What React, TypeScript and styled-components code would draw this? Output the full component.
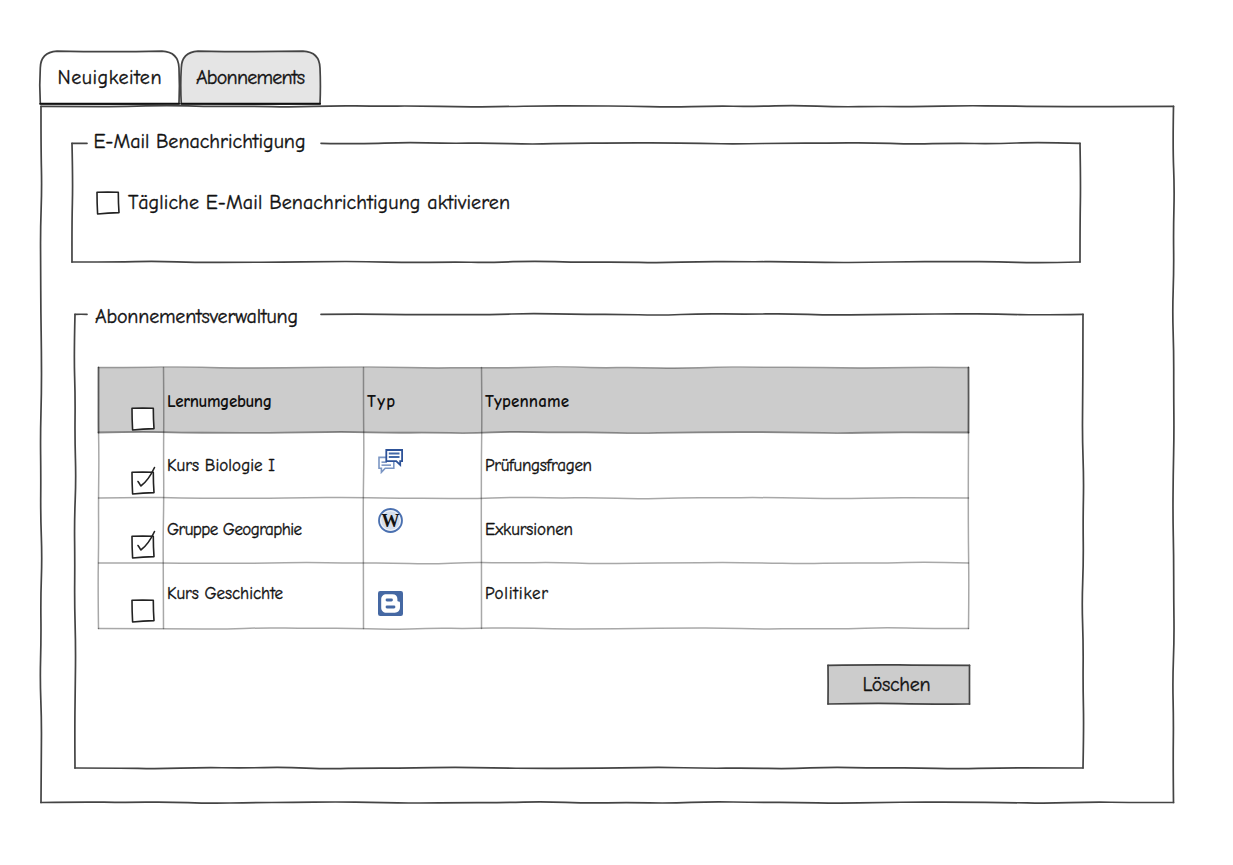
import React, { useLayoutEffect, useRef, useState } from 'react';
import styled, { createGlobalStyle } from 'styled-components';

const Global = createGlobalStyle`
  * { box-sizing: border-box; }
  body { margin: 0; background: #fff; }
`;

/* ---------- hand-drawn strokes ---------- */

type Point = [number, number];

// A slightly unsteady line between two points; the seed picks its waviness.
function wavy([x1, y1]: Point, [x2, y2]: Point, seed: number, amp = 1.1): string {
  const length = Math.hypot(x2 - x1, y2 - y1);
  const steps = Math.max(2, Math.round(length / 42));
  const nx = -(y2 - y1) / length;
  const ny = (x2 - x1) / length;
  const points: Point[] = [];
  for (let i = 0; i <= steps; i++) {
    const t = i / steps;
    const edge = i === 0 || i === steps;
    const d = edge ? 0 : Math.sin(i * 2.1 + seed * 1.7) * Math.cos(i * 0.8 + seed) * amp;
    points.push([x1 + (x2 - x1) * t + nx * d, y1 + (y2 - y1) * t + ny * d]);
  }
  let path = `M${x1} ${y1}`;
  for (let i = 1; i < points.length - 1; i++) {
    const [px, py] = points[i];
    const last = i === points.length - 2;
    const ex = last ? x2 : (px + points[i + 1][0]) / 2;
    const ey = last ? y2 : (py + points[i + 1][1]) / 2;
    path += ` Q${px.toFixed(2)} ${py.toFixed(2)} ${ex.toFixed(2)} ${ey.toFixed(2)}`;
  }
  return path;
}

const Strokes = styled.svg`
  position: absolute;
  inset: 0;
  width: 100%;
  height: 100%;
  overflow: visible;
  fill: none;
  stroke: #444;
  stroke-width: 1.7;
  stroke-linecap: round;
  pointer-events: none;
`;

function Outline({ w, h, seed, gap }: { w: number; h: number; seed: number; gap?: Point }) {
  return (
    <Strokes aria-hidden>
      {gap ? (
        <>
          <path d={wavy([0, 0.3], [gap[0], 0.3], seed, 0.3)} />
          <path d={wavy([gap[1], 0.3], [w, 0.3], seed)} />
        </>
      ) : (
        <path d={wavy([0, 0.3], [w, 0.3], seed)} />
      )}
      <path d={wavy([w, 0.3], [w, h], seed + 1)} />
      <path d={wavy([0, h], [w, h], seed + 2)} />
      <path d={wavy([0, 0.3], [0, h], seed + 3)} />
    </Strokes>
  );
}

/* ---------- text ---------- */

const TextSpan = styled.span<{ $small?: boolean; $bold?: boolean }>`
  display: inline-block;
  white-space: nowrap;
  font-family: 'Comic Sans MS', 'Comic Neue', Lato, 'Liberation Sans', sans-serif;
  font-size: ${(p) => (p.$small ? 17 : 20)}px;
  line-height: ${(p) => (p.$small ? 20 : 24)}px;
  font-weight: ${(p) => (p.$bold ? 700 : 400)};
  -webkit-text-stroke: ${(p) => (p.$bold ? 0 : 0.35)}px #111;
  color: #111;
`;

// Tracks its letters so that the text spans the given width.
function Text({ children, width, small, bold }: { children: string; width: number; small?: boolean; bold?: boolean }) {
  const ref = useRef<HTMLSpanElement>(null);
  const [spacing, setSpacing] = useState(0);
  useLayoutEffect(() => {
    const el = ref.current!;
    const natural = el.getBoundingClientRect().width - spacing * children.length;
    setSpacing((width + 1 - natural) / (children.length - 1));
  }, [width, children]);
  return (
    <TextSpan ref={ref} $small={small} $bold={bold} style={{ letterSpacing: spacing }}>
      {children}
    </TextSpan>
  );
}

/* ---------- checkbox ---------- */

const Box = styled.span`
  display: block;
  flex: none;
  width: 24px;
  height: 24px;
  svg { display: block; overflow: visible; }
`;

function Checkbox({ checked }: { checked?: boolean }) {
  return (
    <Box role="checkbox" aria-checked={!!checked}>
      <svg width="24" height="24" fill="none" stroke="#222" strokeWidth="1.6" strokeLinecap="round" strokeLinejoin="round">
        <path d="M1 1.3 Q12 .9 22.3 1.3 Q22.3 12 23 21.6 Q12 22 1.6 23 Q1 12 1 1.3Z" fill="#fff" />
        {checked && <path d="M7 10.5 Q8.5 12.5 9.8 15 Q17.5 9.5 23.5 -3.5" />}
      </svg>
    </Box>
  );
}

/* ---------- type icons ---------- */

const Icon = styled.svg`
  display: block;
  width: 25px;
  height: 25px;
`;

const ChatIcon = () => (
  <Icon viewBox="0 0 25 25" fill="none">
    <path d="M1 8.4H15.8V19.2H7.2L3.4 23.3V19.2H1Z" fill="#fff" stroke="#7b96c4" strokeWidth="1.6" />
    <path d="M3.5 13.2H9M3.5 16.1H13" stroke="#5b7ab3" strokeWidth="1.3" />
    <path d="M8.3 1H24.1V12.2H22.2V16L18.2 12.2H8.3Z" fill="#fff" stroke="#2d5298" strokeWidth="1.8" />
    <path d="M10.8 4.5H21.5M10.8 8H21.5" stroke="#4268a8" strokeWidth="1.8" />
  </Icon>
);

const LetterW = styled.text`
  font: 700 18px 'Liberation Serif', serif;
  fill: #111;
`;

const WikiIcon = () => (
  <Icon viewBox="0 0 25 25">
    <circle cx="12.5" cy="12.5" r="11.5" fill="#d5deec" stroke="#4a70b0" strokeWidth="1.8" />
    <circle cx="12.5" cy="12.5" r="9.8" fill="none" stroke="#f4f7fb" strokeWidth="1" />
    <LetterW x="12.5" y="18.8" textAnchor="middle" textLength="18" lengthAdjust="spacingAndGlyphs">W</LetterW>
  </Icon>
);

const BlogIcon = () => (
  <Icon viewBox="0 0 25 25">
    <rect width="25" height="25" rx="2.2" fill="#4568a3" />
    <path
      d="M8.6 3.3H14.4C17.6 3.3 19.4 5.3 19.4 8V9.2C19.4 10.2 19.9 10.5 20.7 10.5C21.6 10.5 22 11 22 12V16.3C22 19.5 20 21.7 16.8 21.7H8.6C5.2 21.7 3.2 19.6 3.2 16.4V8.6C3.2 5.3 5.2 3.3 8.6 3.3Z"
      fill="#fff"
    />
    <path d="M9 9H13.5M9 16H16" stroke="#4568a3" strokeWidth="2.8" strokeLinecap="round" />
  </Icon>
);

/* ---------- page ---------- */

const Page = styled.main`
  width: 1233px;
  height: 865px;
  padding: 51px 0 0 40px;
  background: #fff;
`;

const TabBar = styled.div`
  display: flex;
  gap: 2px;
  height: 54.5px;
`;

const Tab = styled.div`
  position: relative;
  width: 139px;
  height: 53px;
  padding: 15px 0 0 17.5px;
  & + & { padding-left: 15px; }
  > span { position: relative; }
`;

function TabItem({ label, width, active }: { label: string; width: number; active?: boolean }) {
  return (
    <Tab role="tab" aria-selected={!!active}>
      <Strokes aria-hidden>
        <path
          d="M.3 52.7 Q-.8 34 .3 17 Q.5 1.5 17 .2 Q70 1.2 122 .2 Q138.5 1 139 17 Q139.8 35 139 52.7 Q70 53.4 .3 52.7Z"
          fill={active ? '#fff' : '#e5e5e5'}
        />
        <path d="M.3 52.8H139" stroke="#111" strokeWidth="2" />
      </Strokes>
      <Text width={width}>{label}</Text>
    </Tab>
  );
}

const Panel = styled.section`
  position: relative;
  width: 1132.5px;
  height: 696.5px;
  margin-left: 1px;
  padding: 37.5px 0 0 31px;
`;

const Group = styled.section<{ $h: number }>`
  position: relative;
  display: flow-root;
  width: 1008px;
  height: ${(p) => p.$h}px;
  & + & { margin: 52px 0 0 3px; }
`;

const Legend = styled.div<{ $x: number; $up: number }>`
  height: 24px;
  margin: -${(p) => p.$up}px 0 0 ${(p) => p.$x}px;
`;

const CheckRow = styled.div`
  display: flex;
  gap: 8px;
  margin: 37px 0 0 24px;
`;

const Table = styled.div`
  position: relative;
  width: 871px;
  height: 262px;
  margin: 38px 0 0 22.5px;
  display: grid;
  grid-template-rows: 66px 65px 65px 65px;
`;

const Row = styled.div<{ $top: number }>`
  position: relative;
  display: grid;
  grid-template-columns: 65.5px 200px 118px 1fr;
  > div { padding: ${(p) => p.$top}px 0 0 4px; }
  > div:first-child { padding: ${(p) => p.$top + 15}px 0 0 33px; }
`;

const IconCell = styled.div<{ $y: number }>`
  && { padding: ${(p) => p.$y}px 0 0 15px; }
`;

function TableLines() {
  return (
    <Strokes aria-hidden>
      <rect x=".5" y=".5" width="870" height="65" fill="#ccc" stroke="none" />
      <g stroke="#000" strokeOpacity=".34" strokeWidth="1.5">
        {[0.5, 131, 196, 261.5].map((y, i) => (
          <path key={y} d={wavy([0.5, y], [870.5, y], i + 4)} />
        ))}
        {[0.5, 65.5, 265.5, 383.5, 870.5].map((x, i) => (
          <path key={x} d={wavy([x, 0.5], [x, 261.5], i + 2, 0.6)} />
        ))}
      </g>
      <g stroke="#000" strokeOpacity=".42" strokeWidth="1.8">
        <path d={wavy([0.5, 65.5], [870.5, 65.5], 5)} />
        <path d={wavy([870.5, 0.5], [870.5, 65.5], 5, 0.3)} />
        <path d={wavy([0.5, 0.5], [0.5, 65.5], 5, 0.3)} />
      </g>
    </Strokes>
  );
}

const rows = [
  { name: 'Kurs Biologie I', nameW: 107, type: 'Prüfungsfragen', typeW: 106, checked: true, top: 23, icon: <ChatIcon />, iconY: 16 },
  { name: 'Gruppe Geographie', nameW: 134, type: 'Exkursionen', typeW: 87, checked: true, top: 22, icon: <WikiIcon />, iconY: 10 },
  { name: 'Kurs Geschichte', nameW: 115, type: 'Politiker', typeW: 62, checked: false, top: 21, icon: <BlogIcon />, iconY: 28 },
];

const Button = styled.button`
  position: relative;
  display: block;
  width: 141.5px;
  height: 39px;
  margin: 36px 0 0 753px;
  padding: 1px 0 0 34.5px;
  border: 0;
  background: #ccc;
  text-align: left;
  > span { position: relative; }
`;

export default function App() {
  return (
    <>
      <Global />
      <Page>
        <TabBar>
          <TabItem label="Neuigkeiten" width={103} active />
          <TabItem label="Abonnements" width={108} />
        </TabBar>
        <Panel>
          <Outline w={1132.5} h={696.5} seed={1} />
          <Group $h={119}>
            <Outline w={1008} h={119} seed={2} gap={[15, 249]} />
            <Legend $x={21.5} $up={13}>
              <Text width={211}>E-Mail Benachrichtigung</Text>
            </Legend>
            <CheckRow>
              <Checkbox />
              <Text width={381}>Tägliche E-Mail Benachrichtigung aktivieren</Text>
            </CheckRow>
          </Group>
          <Group $h={454}>
            <Outline w={1008} h={454} seed={6} gap={[12, 246]} />
            <Legend $x={20} $up={9}>
              <Text width={202}>Abonnementsverwaltung</Text>
            </Legend>
            <Table>
              <TableLines />
              <Row $top={25}>
                <div><Checkbox /></div>
                <div><Text small bold width={104}>Lernumgebung</Text></div>
                <div><Text small bold width={27}>Typ</Text></div>
                <div><Text small bold width={83}>Typenname</Text></div>
              </Row>
              {rows.map((r) => (
                <Row key={r.name} $top={r.top}>
                  <div><Checkbox checked={r.checked} /></div>
                  <div><Text small width={r.nameW}>{r.name}</Text></div>
                  <IconCell $y={r.iconY}>{r.icon}</IconCell>
                  <div><Text small width={r.typeW}>{r.type}</Text></div>
                </Row>
              ))}
            </Table>
            <Button>
              <Outline w={141.5} h={39} seed={3} />
              <Text width={67}>Löschen</Text>
            </Button>
          </Group>
        </Panel>
      </Page>
    </>
  );
}
